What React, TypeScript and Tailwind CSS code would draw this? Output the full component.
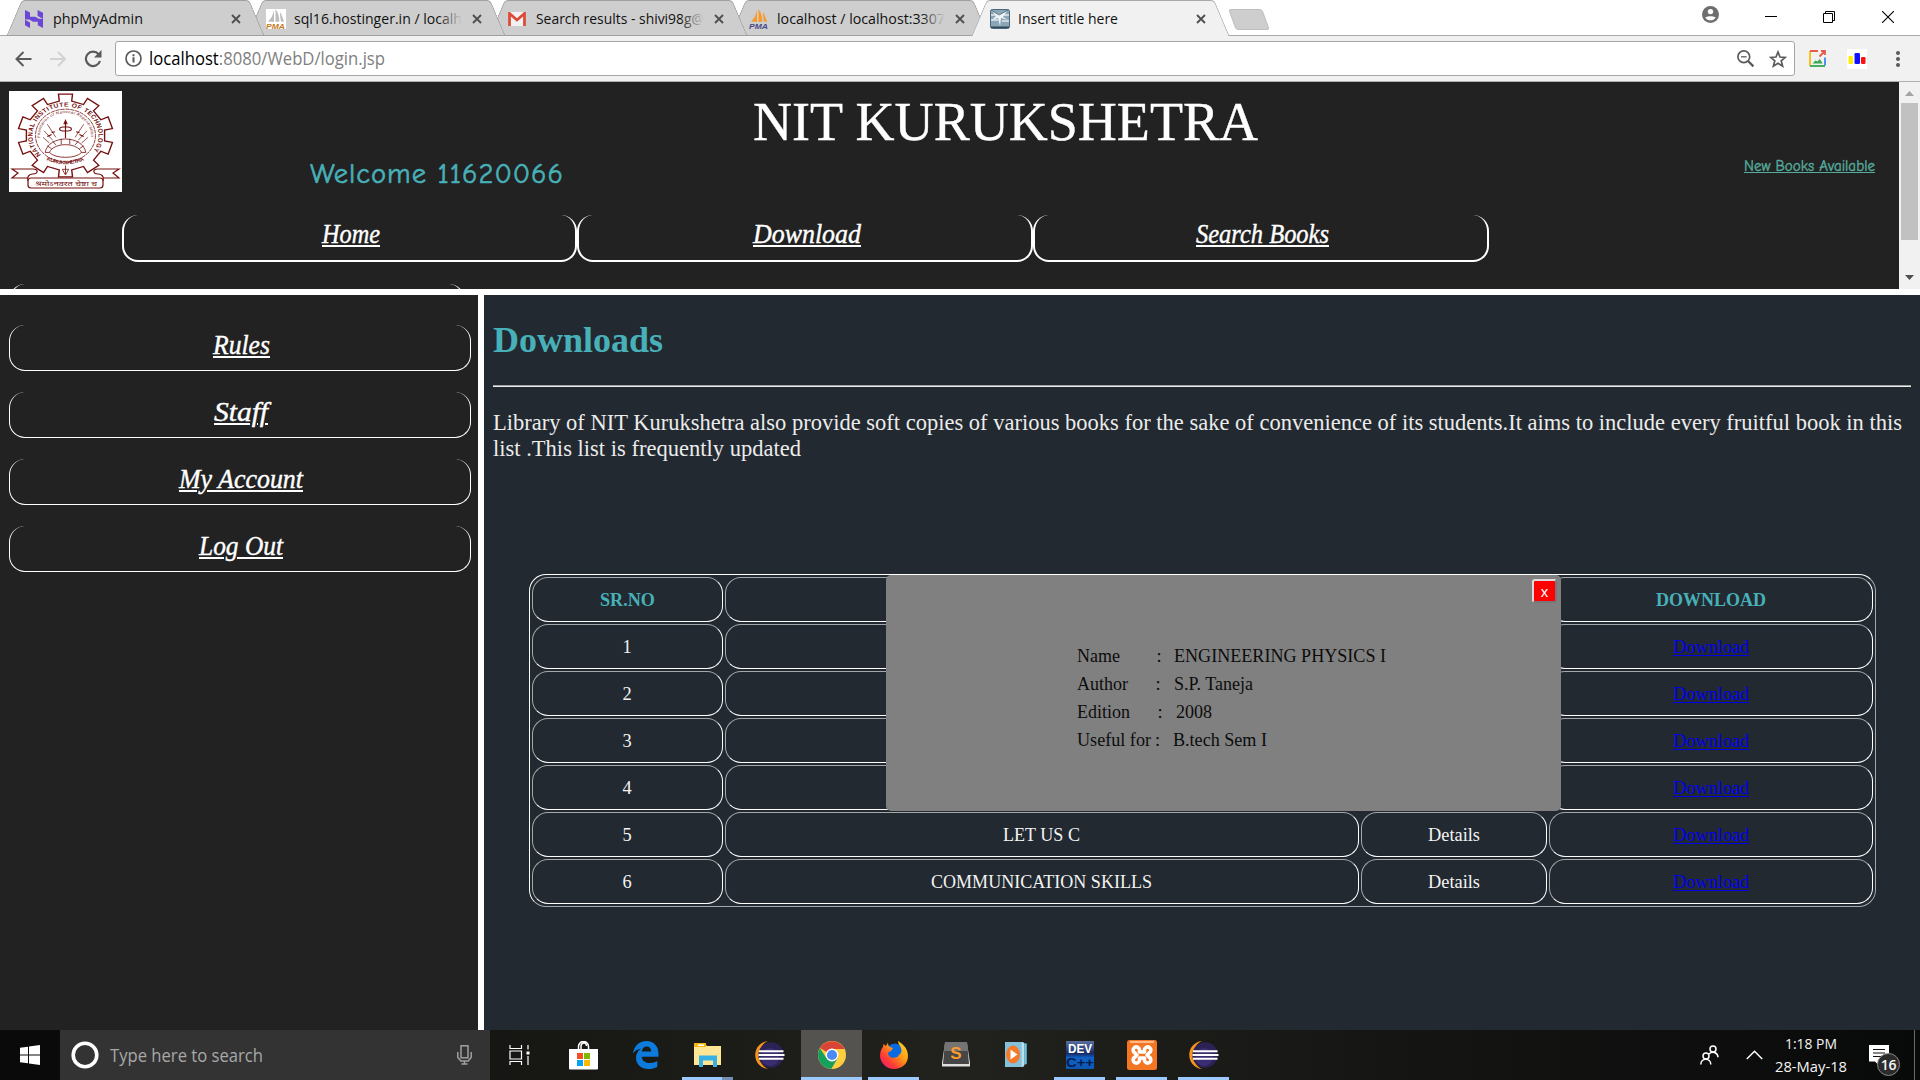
import { useLayoutEffect, useRef, useState, type ReactNode } from "react";

const SERIF = "font-['Liberation_Serif',serif]";
const SCRIPT = "font-['Monotype_Corsiva','Z003','Liberation_Serif',serif] italic";
const COMIC = "font-['Comic_Sans_MS','Comic_Neue','Lato',sans-serif]";

/* A single line of text stretched to the width of its box. */
function Fit({ className, inner = "", children }: { className: string; inner?: string; children: ReactNode }) {
  const box = useRef<HTMLSpanElement>(null);
  const text = useRef<HTMLSpanElement>(null);
  const [scale, setScale] = useState(1);
  useLayoutEffect(() => {
    if (box.current && text.current && text.current.offsetWidth > 0) {
      setScale(box.current.getBoundingClientRect().width / text.current.getBoundingClientRect().width);
    }
  }, []);
  return (
    <span ref={box} className={"block shrink-0 whitespace-nowrap " + className}>
      <span ref={text} className={"inline-block origin-left " + inner} style={{ transform: `scaleX(${scale})` }}>
        {children}
      </span>
    </span>
  );
}

/* ---------- browser chrome ---------- */

function CloseX() {
  return (
    <svg width="10" height="10" viewBox="0 0 10 10" stroke="#505050" strokeWidth="1.9" className="shrink-0">
      <path d="M1 1l8 8M9 1l-8 8" />
    </svg>
  );
}

const HostingerIcon = () => (
  <svg width="18" height="18" viewBox="0 0 18 18" fill="#6b47d6">
    <path d="M0 0l5 2.600v4.200h5.300L15 9.400H0zM12.600 0L18 2.800v6L12.600 6zM0 9.800l5 2.600V18L0 15.200zM3 8.800h15V18l-5.200-2.800v-3.400H8z" />
  </svg>
);

function Sails({ a, b, bg }: { a: string; b: string; bg: string }) {
  return (
    <svg width="20" height="20" viewBox="0 0 20 20">
      <rect width="20" height="20" fill={bg} />
      <path d="M8 1c-1 5-3 9-6 11.500l6 .5zM9.500 0v13l4-.5C13 7 12 3 9.500 0zM14 3c0 4 .5 7 1 9.500l3 .5c-1-3-2-7-4-10z" fill={a} />
      <text x="0" y="19.500" fontSize="8" fontWeight="bold" fontStyle="italic" fontFamily="Liberation Sans" fill={b} textLength="19" lengthAdjust="spacingAndGlyphs">PMA</text>
    </svg>
  );
}

const GmailIcon = () => (
  <svg width="18" height="14" viewBox="0 0 18 14">
    <rect width="18" height="14" rx="1.500" fill="#f2f2f2" />
    <path d="M1.500 14V1.500L9 8l7.500-6.500V14" fill="none" stroke="#dd4b39" strokeWidth="2.800" />
  </svg>
);

const PageIcon = () => (
  <svg width="20" height="20" viewBox="0 0 20 20">
    <rect x=".5" y=".5" width="19" height="19" rx="2" fill="#8aa6b7" stroke="#4a6678" />
    <path d="M1 6h18M1 11h7M12 12h7" stroke="#c9d8e0" strokeWidth="2" />
    <path d="M2 2l7 4 8-4-4 6 5 3-7-2-1 8-2-8-6 2 4-4z" fill="#eef3f6" />
    <path d="M1 1l8 5 9-5" stroke="#4a6678" strokeWidth=".8" fill="none" />
    <path d="M1 17.500h18V19H1z" fill="#2f4a5c" />
  </svg>
);

type Tab = { icon: ReactNode; title: string; width: string; z: string; fade?: boolean; active?: boolean };

const tabs: Tab[] = [
  { icon: <HostingerIcon />, title: "phpMyAdmin", width: "w-[90px]", z: "z-40" },
  { icon: <Sails a="#bdbdbd" b="#c27a1b" bg="#ffffff" />, title: "sql16.hostinger.in / localh", width: "w-[168px]", z: "z-30", fade: true },
  { icon: <GmailIcon />, title: "Search results - shivi98g@", width: "w-[168px]", z: "z-20", fade: true },
  { icon: <Sails a="#f79a2e" b="#4a4a86" bg="none" />, title: "localhost / localhost:3307", width: "w-[168px]", z: "z-10", fade: true },
  { icon: <PageIcon />, title: "Insert title here", width: "w-[100px]", z: "z-50", active: true },
];

function TabView({ tab }: { tab: Tab }) {
  const skin = tab.active ? "h-9 bg-[#f1f1f1] border-[#a9a9a9]" : "h-9 bg-[#cecece] border-[#a0a0a0] border-b";
  return (
    <div className={"relative -mr-[15.7px] flex h-9 w-[257px] shrink-0 items-center pl-[18px] " + tab.z}>
      <span className={"absolute top-0 left-[7px] w-10 -skew-x-[23deg] rounded-tl-sm border-t border-l " + skin} />
      <span className={"absolute top-0 right-[7px] w-10 skew-x-[23deg] rounded-tr-sm border-t border-r " + skin} />
      <span className={"absolute inset-x-6 top-0 border-t " + skin} />
      <span className="relative flex w-5 shrink-0 items-center pt-0.5">{tab.icon}</span>
      <span className="relative ml-2 flex w-[168px] shrink-0 overflow-hidden text-[15px] leading-[38px] text-[#111]">
        <Fit className={tab.width}>{tab.title}</Fit>
        {tab.fade && <span className="absolute inset-y-2 right-0 w-6 bg-linear-to-r from-[#cecece]/0 to-[#cecece]" />}
      </span>
      <span className="relative ml-2.5 pt-0.5"><CloseX /></span>
    </div>
  );
}

function TabStrip() {
  return (
    <div className="flex h-9 border-b border-[#a9a9a9] bg-white">
      <div className="flex h-9 pl-[7px]">
        {tabs.map((t) => <TabView key={t.title} tab={t} />)}
      </div>
      <span className="mt-[9px] ml-[18px] h-[21px] w-[34px] skew-x-[20deg] rounded-[3px] border border-[#bdbdbd] bg-[#cecece]" />
      <div className="ml-auto flex h-9 items-start pr-[26px]">
        <svg width="17" height="17" viewBox="0 0 17 17" className="mt-1.5">
          <circle cx="8.500" cy="8.500" r="8.500" fill="#6e6e6e" />
          <circle cx="8.500" cy="5.600" r="2.700" fill="#fff" />
          <path d="M3.300 11.800c1-2 9.400-2 10.400 0-2.400 3.400-8 3.400-10.400 0z" fill="#fff" />
        </svg>
        <span className="mt-4 ml-[46px] h-px w-3 bg-black" />
        <svg width="12" height="12" viewBox="0 0 12 12" fill="none" stroke="#000" className="mt-[11px] ml-[46px]">
          <path d="M.5 2.500h9v9h-9zM2.500 2.500v-2h9v9h-2" />
        </svg>
        <svg width="12" height="12" viewBox="0 0 12 12" stroke="#000" strokeWidth="1.100" className="mt-[11px] ml-[47px]">
          <path d="M0 0l12 12M12 0L0 12" />
        </svg>
      </div>
    </div>
  );
}

function Toolbar() {
  return (
    <div className="flex h-[46px] items-start border-b border-[#b0b0b0] bg-[#f1f1f1] pt-[5px] pl-[15px]">
      <svg width="17" height="16" viewBox="0 0 17 16" fill="none" stroke="#5a5a5a" strokeWidth="2" className="mt-2.5">
        <path d="M16.500 8H1.500M8.500 1L1.500 8l7 7" />
      </svg>
      <svg width="17" height="16" viewBox="0 0 17 16" fill="none" stroke="#d2d2d2" strokeWidth="2" className="mt-2.5 ml-[18px]">
        <path d="M0 8h15M8 1l7 7-7 7" />
      </svg>
      <svg width="18" height="18" viewBox="0 0 18 18" className="mt-[9px] ml-[17px]">
        <path d="M14.600 4.200A7.200 7.200 0 1 0 16 11" fill="none" stroke="#5a5a5a" strokeWidth="2.200" />
        <path d="M17.500 0v7.500H10z" fill="#5a5a5a" />
      </svg>
      <div className="ml-[13px] flex h-[35px] w-[1680px] items-center rounded-[3px] border border-[#a6a6a6] bg-white pl-[9px]">
        <svg width="17" height="17" viewBox="0 0 17 17" fill="none" stroke="#5a5a5a" strokeWidth="1.700">
          <circle cx="8.500" cy="8.500" r="7.500" />
          <path d="M8.500 7.300v5.200M8.500 4.300v1.900" strokeWidth="2" />
        </svg>
        <Fit className="ml-[7px] w-[236px] text-[18px] leading-[33px] text-[#808080]">
          <span className="text-black">localhost</span>:8080/WebD/login.jsp
        </Fit>
        <svg width="17" height="17" viewBox="0 0 17 17" fill="none" stroke="#5a5a5a" strokeWidth="1.700" className="ml-auto">
          <circle cx="6.800" cy="6.800" r="5.900" />
          <path d="M11 11l5.400 5.400" strokeWidth="2.300" />
          <path d="M4 6.800h5.600" strokeWidth="1.300" />
        </svg>
        <svg width="18" height="18" viewBox="0 0 18 18" fill="none" stroke="#5a5a5a" strokeWidth="1.700" className="mr-[7px] ml-[15px]">
          <path d="M9 2l2 5 5.300.4-4.100 3.400 1.400 5.300L9 13.200l-4.600 2.900 1.400-5.300L1.700 7.400 7 7z" />
        </svg>
      </div>
      <svg width="17" height="17" viewBox="0 0 17 17" fill="none" strokeWidth="1.800" className="mt-[9px] ml-[14px]">
        <path d="M1 16V1" stroke="#fbbc05" />
        <path d="M1 1h8M10.500 6.500l5-5M12 1h4v4" stroke="#ea5a4a" />
        <path d="M16 7.500v8" stroke="#4285f4" />
        <path d="M1 16h15" stroke="#34a853" />
        <path d="M3.500 13.500l3-3 2 1 2.200-2.500 3 4.500z" fill="#34a853" />
      </svg>
      <svg width="20" height="20" viewBox="0 0 20 20" className="mt-2 ml-[21px]">
        <rect width="20" height="20" fill="#fff" />
        <rect x="1.500" y="7" width="4.500" height="8" rx="1.200" fill="#ffee00" />
        <rect x="7.500" y="4" width="5.500" height="11" rx="1.200" fill="#1010ff" />
        <rect x="14" y="8" width="4.500" height="7" rx="1.200" fill="#ff1010" />
      </svg>
      <svg width="4" height="16" viewBox="0 0 4 16" fill="#5a5a5a" className="mt-2.5 ml-[29px]">
        <circle cx="2" cy="2" r="2" /><circle cx="2" cy="8" r="2" /><circle cx="2" cy="14" r="2" />
      </svg>
    </div>
  );
}

/* ---------- top frame ---------- */

function gearPath() {
  const pt = (r: number, deg: number) => {
    const a = ((deg - 90) * Math.PI) / 180;
    return `${(r * Math.cos(a)).toFixed(2)} ${(r * Math.sin(a)).toFixed(2)}`;
  };
  const p: string[] = [];
  for (let i = 0; i < 10; i++) {
    const c = i * 36;
    p.push(pt(37, c - 9), pt(44.5, c - 8.5), pt(44.5, c + 8.5), pt(37, c + 9));
  }
  return "M" + p.join("L") + "Z";
}

function Emblem() {
  const red = "#74100f";
  return (
    <svg width="113" height="101" viewBox="0 0 113 101" className="shrink-0 bg-white">
      <g transform="translate(56.5 44.500) scale(1.07 .94)" fill="none" stroke={red}>
        <path d={gearPath()} strokeWidth="1.300" />
        <circle r="28" strokeWidth=".8" strokeDasharray="4 .7" />
        <path id="ring-outer" d="M-23 20.500A30.800 30.800 0 1 1 23 20.500" stroke="none" />
        <path id="ring-inner" d="M-22 9A23.800 23.800 0 1 1 22 9" stroke="none" />
        <path id="ring-low" d="M-18 26Q0 35 18 26" stroke="none" />
        <g fill={red} stroke="none" fontFamily="Liberation Sans">
          <text fontSize="6.300" fontWeight="bold"><textPath href="#ring-outer" textLength="136">NATIONAL INSTITUTE OF TECHNOLOGY</textPath></text>
          <text fontSize="4" fontStyle="italic"><textPath href="#ring-inner" startOffset="7" textLength="78">Foundation of National Regeneration</textPath></text>
          <text fontSize="5.400" fontWeight="bold"><textPath href="#ring-low" textLength="37">KURUKSHETRA</textPath></text>
        </g>
        <path d="M0 3V-14M-1.500-12L0-16l1.500 4M-5.500-7c0-3 11-3 11 0s-11 3-11 0" strokeWidth="1.100" />
        <path d="M-9 2l-8-14M-12 5l-8-10M-15 8l-6-6M9 2l8-14M12 5l8-10M15 8l6-6" strokeWidth=".7" />
        <path d="M-13-3l3-1M-17 1l4-2M13-3l-3-1M17 1l-4-2" strokeWidth="1.300" />
        <path d="M-19 18C-16-1 16-1 19 18M-15 18C-11 7 11 7 15 18C10 25-10 25-15 18M-19 18h4M19 18h-4M-17 11l4 3M-12 6l3 4M-4 3.500v6M4 3.500v6M12 6l-3 4M17 11l-4 3" strokeWidth=".8" />
        <path d="M-3 36h6l-3 6zM0 32v9" strokeWidth=".8" />
      </g>
      <g fill="none" stroke={red} strokeWidth="1.200">
        <path d="M19 87H3l6-5-6-4h21c6 0 5 5 0 5-5 0-6 4-5 7M94 87h16l-6-5 6-4H89c-6 0-5 5 0 5 5 0 6 4 5 7" />
        <rect x="19" y="87" width="75" height="10" rx="3" fill="#fff" />
      </g>
      <text x="26" y="95" fontSize="7" fill={red} fontFamily="'Noto Sans Devanagari','Noto Sans',sans-serif" textLength="62" lengthAdjust="spacingAndGlyphs">श्रमोऽनवरत चेष्टा च</text>
    </svg>
  );
}

const topLinks = [
  { label: "Home", width: "w-[58px]" },
  { label: "Download", width: "w-[108px]" },
  { label: "Search Books", width: "w-[133px]" },
];

function TopFrame() {
  return (
    <div className="flex h-[207px] bg-[#222222]">
      <div className="flex h-full w-[1899px] flex-col overflow-hidden">
        <div className="flex h-[133px] shrink-0 items-start pt-[9px] pl-[9px]">
          <Emblem />
          <Fit className={"mt-[68px] ml-[188px] w-[254px] text-[29px] leading-[30px] font-medium tracking-[1px] text-[#48b0b8] [-webkit-text-stroke:0.6px_#48b0b8] " + COMIC}>Welcome 11620066</Fit>
          <Fit className={"mt-1 ml-[189px] w-[505px] text-[54px] leading-[54px] text-white [-webkit-text-stroke:0.4px_#ffffff] " + SERIF}>NIT KURUKSHETRA</Fit>
          <Fit inner="underline underline-offset-1" className={"mt-[67px] ml-[486px] w-[131px] text-[15px] leading-4 text-[#55ab9c] [-webkit-text-stroke:0.4px_#55ab9c] " + COMIC}>New Books Available</Fit>
        </div>
        <div className="flex shrink-0 pl-[121.5px]">
          {topLinks.map((l) => (
            <div key={l.label} className="flex h-[47px] w-[455.9px] justify-center rounded-[16px] border-x-2 border-b-2 border-white pt-[3px] pl-[3px]">
              <Fit inner="underline decoration-2 underline-offset-2" className={"text-[27px] leading-8 text-white [-webkit-text-stroke:0.4px_#ffffff] " + l.width + " " + SCRIPT}>{l.label}</Fit>
            </div>
          ))}
        </div>
        <div className="mt-[22px] ml-[9px] h-[47px] w-[456px] shrink-0 rounded-[16px] border-x-2 border-b-2 border-white" />
      </div>
      <div className="flex w-[21px] flex-col items-center bg-[#f1f1f1] pt-[9px]">
        <svg width="9" height="5" viewBox="0 0 9 5" fill="#a3a3a3"><path d="M4.500 0L9 5H0z" /></svg>
        <span className="mt-[7px] h-[137px] w-[17px] bg-[#c1c1c1]" />
        <svg width="9" height="5" viewBox="0 0 9 5" fill="#505050" className="mt-[35px]"><path d="M0 0h9L4.500 5z" /></svg>
      </div>
    </div>
  );
}

/* ---------- side frame ---------- */

const sideLinks = [
  { label: "Rules", width: "w-[57px]" },
  { label: "Staff", width: "w-[54px]" },
  { label: "My Account", width: "w-[124px]" },
  { label: "Log Out", width: "w-[84px]" },
];

function SideFrame() {
  return (
    <div className="flex w-[478px] shrink-0 flex-col gap-[21px] bg-[#222222] pt-[30px] pl-[9px]">
      {sideLinks.map((l) => (
        <div key={l.label} className="flex h-[46px] w-[462px] justify-center rounded-[16px] border-x border-b border-white pt-1 pl-0.5">
          <Fit inner="underline decoration-2 underline-offset-2" className={"text-[27px] leading-8 text-white [-webkit-text-stroke:0.4px_#ffffff] " + l.width + " " + SCRIPT}>{l.label}</Fit>
        </div>
      ))}
    </div>
  );
}

/* ---------- main frame ---------- */

const books = [
  { name: "ENGINEERING PHYSICS I", width: "w-[212px]" },
  { name: "ENGINEERING PHYSICS II", width: "w-[218px]" },
  { name: "ENGINEERING MATHS I", width: "w-[200px]" },
  { name: "ENGINEERING MATHS II", width: "w-[206px]" },
  { name: "LET US C", width: "w-[77px]" },
  { name: "COMMUNICATION SKILLS", width: "w-[221px]" },
];

function Cell({ head, children }: { head?: boolean; children: ReactNode }) {
  return (
    <div className={"flex h-[45px] justify-center rounded-[16px] border border-t-[#a3a8ab] border-r-white border-b-white border-l-[#a3a8ab] pr-px text-[18.4px] leading-[44px] " + (head ? "font-bold text-[#48b0b8]" : "text-[#f4f4f4]")}>
      {children}
    </div>
  );
}

function BooksTable() {
  return (
    <div className="mt-28 ml-9 grid h-[333px] w-[1347px] grid-cols-[191px_634px_186px_324px] content-start gap-0.5 rounded-[17px] border border-t-white border-r-[#a3a8ab] border-b-[#a3a8ab] border-l-white p-0.5">
      <Cell head><Fit className="w-[55px]">SR.NO</Fit></Cell>
      <Cell head>{null}</Cell>
      <Cell head>{null}</Cell>
      <Cell head><Fit className="w-[110px]">DOWNLOAD</Fit></Cell>
      {books.map((b, i) => (
        <div key={b.name} className="contents">
          <Cell>{i + 1}</Cell>
          <Cell>{i > 3 && <Fit className={b.width}>{b.name}</Fit>}</Cell>
          <Cell>{i > 3 && <Fit className="w-[52px]">Details</Fit>}</Cell>
          <Cell><Fit inner="underline decoration-1 underline-offset-2" className="w-[76px] text-[#0000ee]">Download</Fit></Cell>
        </div>
      ))}
    </div>
  );
}

const details = [
  { label: "Name", lw: "w-[43px]", pad: "pl-[36.5px]", value: "ENGINEERING PHYSICS I", vw: "w-[212px]", gap: "ml-[12.5px]" },
  { label: "Author", lw: "w-[51px]", pad: "pl-[27.5px]", value: "S.P. Taneja", vw: "w-[79px]", gap: "ml-[13.5px]" },
  { label: "Edition", lw: "w-[53px]", pad: "pl-[27.5px]", value: "2008", vw: "w-[36px]", gap: "ml-[13px]" },
  { label: "Useful for", lw: "w-[74px]", pad: "pl-[4px]", value: "B.tech Sem I", vw: "w-[94px]", gap: "ml-[13px]" },
];

function DetailsPopup() {
  return (
    <div className="absolute top-[280px] left-[402px] h-[236px] w-[675px] rounded-[5px] bg-[#808080]">
      <button className="absolute top-1 right-1 flex h-6 w-[25px] items-center justify-center rounded-[3px] border-2 border-t-[#dcdcdc] border-r-[#777] border-b-[#777] border-l-[#dcdcdc] bg-[#ff0000] pt-px font-['Liberation_Sans',sans-serif] text-[15px] leading-none text-white">
        x
      </button>
      <div className="flex flex-col pt-[67px] pl-[191px] text-[18.4px] leading-7 text-[#0c0c0c]">
        {details.map((d) => (
          <div key={d.label} className="flex h-7">
            <Fit className={d.lw}>{d.label}</Fit>
            <span className={d.pad}>:</span>
            <Fit className={d.vw + " " + d.gap}>{d.value}</Fit>
          </div>
        ))}
      </div>
    </div>
  );
}

function MainFrame() {
  return (
    <div className={"relative ml-1.5 flex flex-1 flex-col bg-[#222930] pl-[9px] " + SERIF}>
      <h1 className="pt-[25px] text-[36px] leading-10 font-bold text-[#48b0b8]">
        <Fit className="w-[170px]">Downloads</Fit>
      </h1>
      <div className="mt-[25px] h-0.5 w-[1418px] border-t border-b border-t-[#a0a0a0] border-b-[#eeeeee]" />
      <div className="pt-[23px] text-[23px] leading-[26px] text-[#ececec]">
        <Fit className="w-[1409px]">
          Library of NIT Kurukshetra also provide soft copies of various books for the sake of convenience of its students.It aims to include every fruitful book in this
        </Fit>
        <Fit className="w-[308px]">list .This list is frequently updated</Fit>
      </div>
      <BooksTable />
      <DetailsPopup />
    </div>
  );
}

/* ---------- taskbar ---------- */

const TaskView = () => (
  <svg width="21" height="20" viewBox="0 0 21 20" fill="none" stroke="#fff" strokeWidth="1.200" className="-ml-1">
    <path d="M1 0v3.500h11.500V0M1 20v-3.500h11.500V20M1 6h11.500v8H1zM19 0v4.500M19 11v9" />
    <rect x="17.500" y="6.500" width="3" height="3" fill="#fff" stroke="none" />
  </svg>
);

const Store = () => (
  <svg width="29" height="29" viewBox="0 0 29 29">
    <path d="M9.500 9V5.500a5 5 0 0 1 10 0V9M12 9V5c0-3 5-5 5.500 0" fill="none" stroke="#fff" strokeWidth="1.500" />
    <path d="M0 8h29v19.500a1 1 0 0 1-1 1H1a1 1 0 0 1-1-1z" fill="#fff" />
    <path d="M8 12h6v6H8z" fill="#f25022" /><path d="M15 12h6v6h-6z" fill="#7fba00" />
    <path d="M8 19h6v6H8z" fill="#00a4ef" /><path d="M15 19h6v6h-6z" fill="#ffb900" />
  </svg>
);

const Edge = () => (
  <svg width="26" height="28" viewBox="0 0 26 28">
    <path d="M0 12.500C1 5 6 0 13.500 0 21 0 25.500 5.500 25.500 12.500v3.300H8.700c.3 4.700 4.300 6.200 8.300 6.200 3 0 5.300-.9 7.300-2v5.700C22 27.200 18.700 28 15.500 28 8 28 3 23.500 3 16.800c0-4.300 2.200-7.500 5.500-9.300C4.500 8 1.500 10 0 12.500zm8.800-2h9.400c0-3-1.500-5-4.500-5-2.800 0-4.600 2-4.900 5z" fill="#0c7bdb" />
  </svg>
);

const Folder = () => (
  <svg width="28" height="24" viewBox="0 0 28 24">
    <path d="M0 1h11l2 2h14v19H0z" fill="#ffe694" />
    <path d="M0 0h12v4H0z" fill="#f5b916" /><path d="M4 1.500h6v1.500H4z" fill="#fff" />
    <path d="M5 24V12.500h18V24h-4v-6.500H9V24z" fill="#37b0e6" />
  </svg>
);

const Eclipse = () => (
  <svg width="30" height="28" viewBox="0 0 30 28">
    <path d="M13 0C-4 2-4 26 13 28 2 24 2 4 13 0z" fill="#f7941e" />
    <circle cx="16" cy="14" r="12.700" fill="#2c2255" />
    <circle cx="15" cy="16" r="9" fill="#3a2d72" />
    <path d="M4 9.300h24.500v2H4zM3.500 13h26v2h-26zM4 16.800h24.500v2H4z" fill="#fff" />
  </svg>
);

const Chrome = () => (
  <svg width="28" height="28" viewBox="0 0 28 28">
    <circle cx="14" cy="14" r="14" fill="#ffcd40" />
    <path d="M14 14L1.900 7A14 14 0 0 1 26.500 8H14z" fill="#da4437" />
    <path d="M1.900 7A14 14 0 0 0 13.300 28L19.500 17.500 8.300 17z" fill="#16a05e" />
    <circle cx="14" cy="14" r="6.400" fill="#fff" /><circle cx="14" cy="14" r="5.100" fill="#4a8af4" />
  </svg>
);

const Firefox = () => (
  <svg width="28" height="28" viewBox="0 0 28 28">
    <defs>
      <linearGradient id="fx" x1="1" y1="0" x2="0" y2="1">
        <stop offset="0" stopColor="#ffe226" /><stop offset=".4" stopColor="#ff9a16" />
        <stop offset=".7" stopColor="#ff3b36" /><stop offset="1" stopColor="#e31587" />
      </linearGradient>
    </defs>
    <circle cx="15" cy="12" r="9.500" fill="#0a6be0" />
    <path d="M18 0c3 2 10 6 10 15 0 8-6.500 13-14 13S0 22 0 14.500C0 10 2 7 3 6l.5-3L6 5l2-3.500c0 2 .5 4 2 4.500l3 1-2 3-3 1.500c0 4.500 4 6 7 5s4-1 3-2c3-1 5-5 2-9.500-1-2-2-3-2-5z" fill="url(#fx)" />
  </svg>
);

const Sublime = () => (
  <svg width="28" height="26" viewBox="0 0 28 26">
    <path d="M3 1h22l3 20v3.500H0V21z" fill="#dedede" />
    <path d="M3 0h22l2 22H1z" fill="#464646" /><path d="M3 0h22l1 9H2z" fill="#747474" />
    <text x="14" y="17" textAnchor="middle" fontFamily="Liberation Sans" fontWeight="bold" fontSize="17" fill="#ff9a2d">S</text>
  </svg>
);

const Player = () => (
  <svg width="26" height="26" viewBox="0 0 26 26" className="-ml-[3px]">
    <path d="M4 0l20 1.500V22L8 25z" fill="#4f9fbb" /><path d="M2 0h17v25H2z" fill="#86c1dc" />
    <path d="M19 0l2 1v23l-2 1zM22.500 1.500v21" fill="#b8e0ee" stroke="#b8e0ee" strokeWidth=".5" />
    <ellipse cx="10" cy="12.500" rx="7" ry="9" fill="#f5792a" /><path d="M7.500 7.500l7 5-7 5z" fill="#fff" />
  </svg>
);

const DevCpp = () => (
  <svg width="28" height="28" viewBox="0 0 28 28">
    <defs>
      <linearGradient id="dv" x1="0" y1="0" x2="0" y2="1">
        <stop offset="0" stopColor="#5b6ea0" /><stop offset=".45" stopColor="#162a66" />
        <stop offset=".6" stopColor="#0f62c8" /><stop offset="1" stopColor="#0d56b4" />
      </linearGradient>
    </defs>
    <path d="M0 0h28v28H0z" fill="url(#dv)" />
    <text x="2" y="12" fontFamily="Liberation Sans" fontWeight="bold" fontSize="12" fill="#fff" textLength="24" lengthAdjust="spacingAndGlyphs">DEV</text>
    <text x="0" y="26" fontFamily="Liberation Sans" fontWeight="bold" fontSize="12.500" fill="#041c4c" textLength="28" lengthAdjust="spacingAndGlyphs">C++</text>
  </svg>
);

const Xampp = () => (
  <svg width="30" height="30" viewBox="0 0 30 30">
    <rect width="30" height="30" rx="2.500" fill="#f37623" /><path d="M3 1h24v2H3z" fill="#ffb98a" />
    <path d="M12.500 12V9.500a3.200 3.200 0 1 0-4.500 3.500L10 15l-2 2a3.200 3.200 0 1 0 4.500 3.500V18h5v2.500A3.200 3.200 0 1 0 22 17l-2-2 2-2a3.200 3.200 0 1 0-4.500-3.500V12z" fill="none" stroke="#fff" strokeWidth="3.600" strokeLinejoin="round" />
  </svg>
);

const apps: { id: string; icon: ReactNode; line?: "full" | "short" | "split" }[] = [
  { id: "taskview", icon: <TaskView /> },
  { id: "store", icon: <Store /> },
  { id: "edge", icon: <Edge /> },
  { id: "folder", icon: <Folder />, line: "split" },
  { id: "eclipse", icon: <Eclipse /> },
  { id: "chrome", icon: <Chrome />, line: "full" },
  { id: "firefox", icon: <Firefox />, line: "short" },
  { id: "sublime", icon: <Sublime /> },
  { id: "player", icon: <Player /> },
  { id: "dev", icon: <DevCpp />, line: "short" },
  { id: "xampp", icon: <Xampp />, line: "short" },
  { id: "eclipse2", icon: <Eclipse />, line: "short" },
];

function Taskbar() {
  return (
    <div className="flex h-[50px] bg-linear-to-r from-[#0b0b0a] via-[#21211d] to-[#080909]">
      <div className="flex w-[60px] items-center justify-center bg-[#0a0a0a]">
        <svg width="20" height="20" viewBox="0 0 20 20" fill="#fff">
          <path d="M0 2.800L8 1.700v7.800H0zM9 1.500L20 0v9.500H9zM0 10.500h8v7.800l-8-1.100zM9 10.500h11V20L9 18.500z" />
        </svg>
      </div>
      <div className="flex w-[430px] items-center bg-[#333333] pr-[18px] pl-[11px]">
        <svg width="28" height="28" viewBox="0 0 28 28"><circle cx="14" cy="14" r="11.800" fill="none" stroke="#fff" strokeWidth="3.600" /></svg>
        <Fit className="ml-[11px] w-[153px] text-[17.5px] leading-[50px] text-[#a8a8a8]">Type here to search</Fit>
        <svg width="15" height="20" viewBox="0 0 15 20" fill="none" stroke="#a0a0a0" strokeWidth="1.500" className="ml-auto">
          <rect x="4" y=".8" width="7" height="12" /><path d="M.8 7v5.500l3 3.500h7.400l3-3.500V7M7.500 16v3M4.500 19h6" />
        </svg>
      </div>
      <div className="flex">
        {apps.map((a) => (
          <div key={a.id} className={"ml-px flex w-[61px] shrink-0 flex-col items-center " + (a.id === "chrome" ? "bg-[#55534f]" : "")}>
            <span className="flex h-[47px] items-center pt-[3px]">{a.icon}</span>
            {a.line === "full" && <span className="h-[3px] w-full bg-[#9ccaff]" />}
            {a.line === "short" && <span className="h-[3px] w-[51px] bg-[#9ccaff]" />}
            {a.line === "split" && <span className="h-[3px] w-[51px] border-r-[11px] border-[#7590b5] bg-[#9ccaff]" />}
          </div>
        ))}
      </div>
      <div className="ml-auto flex text-[#f5f5f5]">
        <svg width="19" height="20" viewBox="0 0 19 20" fill="none" stroke="#fff" strokeWidth="1.500" className="mt-[15px]">
          <circle cx="13" cy="4" r="3" /><circle cx="6" cy="11" r="3" />
          <path d="M.8 19.500c0-7 10-7 10 0M9 8.800c4-3 9-1 9 3.500" />
        </svg>
        <svg width="17" height="10" viewBox="0 0 17 10" fill="none" stroke="#fff" strokeWidth="1.500" className="mt-5 ml-[27px]">
          <path d="M.8 9l7.700-7.700L16.200 9" />
        </svg>
        <div className="ml-[11px] flex w-[73px] flex-col items-center pt-0.5 text-[15px] leading-[23px]">
          <Fit className="w-[52px]">1:18 PM</Fit>
          <Fit className="w-[72px]">28-May-18</Fit>
        </div>
        <div className="relative mt-[15px] ml-[22px] w-[31px]">
          <svg width="20" height="21" viewBox="0 0 20 21">
            <path d="M0 0h20v16.500H10.500V21L6 16.500H0z" fill="#fff" /><path d="M4 4.500h12M4 8h12M4 11.500h12" stroke="#111" strokeWidth="1.200" />
          </svg>
          <span className="absolute top-2 left-2 flex size-[23px] items-center justify-center rounded-full border border-[#8a8a8a] bg-[#2b2b2b] text-[14px] font-semibold tracking-tight">16</span>
        </div>
        <span className="mr-[5px] ml-[14px] w-px bg-[#6a6a6a]" />
      </div>
    </div>
  );
}

export default function App() {
  return (
    <div className="flex h-[1080px] w-[1920px] flex-col overflow-hidden bg-white font-['Open_Sans',sans-serif]">
      <TabStrip />
      <Toolbar />
      <TopFrame />
      <div className="mt-1.5 flex h-[735px] shrink-0">
        <SideFrame />
        <MainFrame />
      </div>
      <Taskbar />
    </div>
  );
}
